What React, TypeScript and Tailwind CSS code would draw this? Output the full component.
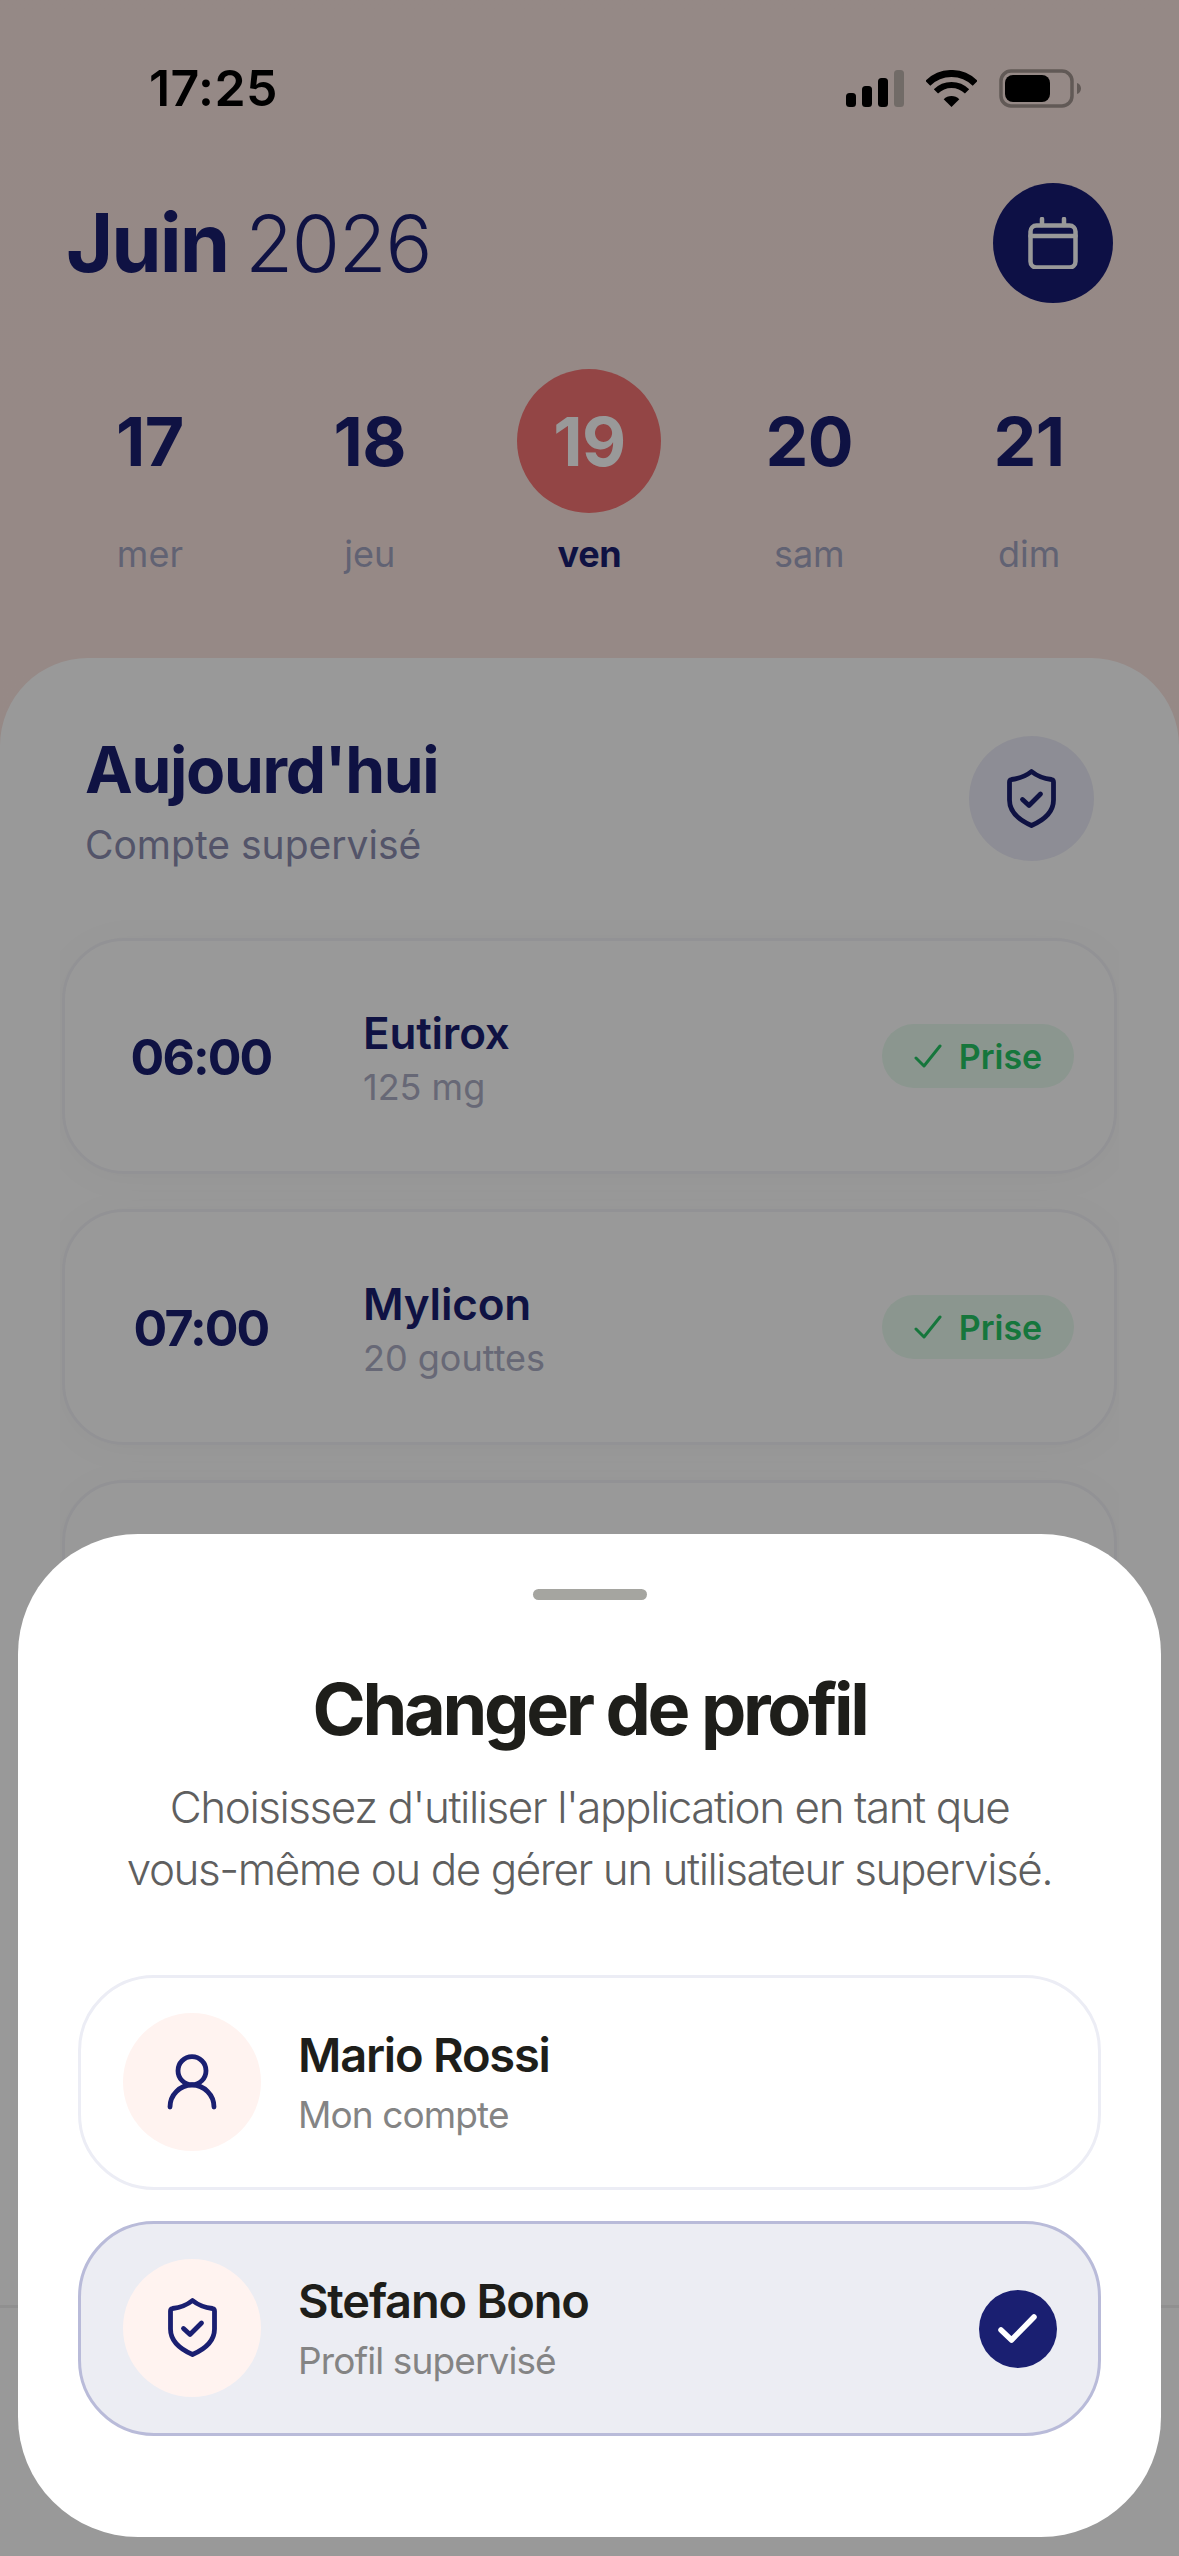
import React from "react";

const NAVY = "#1a1f71";

function Shield({ w = 49, h = 59, stroke = "#1a1f71" }: { w?: number; h?: number; stroke?: string }) {
  return (
    <svg width={w} height={h} viewBox="0 0 49 59" fill="none" stroke={stroke} strokeWidth="4.8" strokeLinecap="round" strokeLinejoin="round">
      <path d="M24.5 2.5C30 7 36 9.5 44.5 10.5Q46.5 10.8 46.5 13V31C46.5 44 36 51.5 24.5 56.5C13 51.5 2.5 44 2.5 31V13Q2.5 10.8 4.5 10.5C13 9.5 19 7 24.5 2.5Z" />
      <path d="M15.5 30.5L22 36.5L33.5 25" />
    </svg>
  );
}

function Person() {
  return (
    <svg width="50" height="56" viewBox="0 0 50 56" fill="none" stroke={NAVY} strokeWidth="4.8" strokeLinecap="round">
      <circle cx="25" cy="16.7" r="14" />
      <path d="M3 53a22 22 0 0 1 44 0" />
    </svg>
  );
}

function StatusIcons() {
  return (
    <div className="flex items-center h-[39px] mr-[98px]">
      <svg width="58" height="37" viewBox="0 0 58 37" className="mr-[22px]">
        <rect x="0" y="23" width="10" height="14" rx="3.5" fill="#000" />
        <rect x="16" y="16" width="10" height="21" rx="3.5" fill="#000" />
        <rect x="32" y="8" width="10" height="29" rx="3.5" fill="#000" />
        <rect x="48" y="0" width="10" height="37" rx="3.5" fill="#bdb2ac" />
      </svg>
      <svg width="51" height="37" viewBox="0 0 51 37" className="mr-[22px]" fill="none" stroke="#000">
        <path d="M1.8 13.3A33.5 33.5 0 0 1 49.2 13.3" strokeWidth="7" />
        <path d="M9.94 21.44A22 22 0 0 1 41.06 21.44" strokeWidth="6" />
        <path d="M25.5 37L17.7 29.2A11 11 0 0 1 33.3 29.2Z" fill="#000" stroke="none" />
      </svg>
      <svg width="82" height="39" viewBox="0 0 82 39">
        <rect x="2" y="2" width="71" height="35" rx="10" fill="none" stroke="#a2958f" strokeWidth="3.5" />
        <rect x="6" y="6" width="45" height="27" rx="8" fill="#000" />
        <path d="M78 14c2.500.5 4 3 4 5.500s-1.500 5-4 5.500z" fill="#a2958f" />
      </svg>
    </div>
  );
}

function Day({ n, d, active }: { n: string; d: string; active?: boolean }) {
  return (
    <div className="flex flex-col items-center">
      <div
        className={
          active
            ? "w-[144px] h-[144px] rounded-full bg-[#f57373] flex items-center justify-center text-[68px] font-bold text-white tracking-[-0.6px]"
            : "w-[144px] h-[144px] rounded-full flex items-center justify-center text-[68px] font-bold text-[#1a1f71] tracking-[-0.6px]"
        }
      >
        {n}
      </div>
      <div
        className={
          active
            ? "mt-[19px] h-[44px] leading-[44px] text-[36px] font-bold text-[#1a1f71] tracking-[-0.3px]"
            : "mt-[19px] h-[44px] leading-[44px] text-[36px] font-normal text-[#a2a4c0]"
        }
      >
        {d}
      </div>
    </div>
  );
}

function Med({ t, name, sub }: { t: string; name: string; sub: string }) {
  return (
    <div className="h-[236px] shrink-0 rounded-[62px] bg-white border-[3px] border-[#f4f4f8] shadow-[0_4px_40px_rgba(0,0,0,0.03)] flex items-center">
      <div className="w-[272px] pt-[2px] text-center text-[50px] font-bold text-[#1a1f71] tracking-[-1.9px]">{t}</div>
      <div className="ml-[26px] pt-[4px] flex-1 flex flex-col">
        <div className="text-[44px] leading-[52px] font-semibold text-[#1a1f71] tracking-[-0.2px]">{name}</div>
        <div className="mt-[6px] text-[36px] leading-[44px] text-[#acaec5]">{sub}</div>
      </div>
      <div className="mr-[40px] w-[192px] h-[64px] rounded-full bg-[#e8fbef] flex items-center justify-center gap-[17px]">
        <svg width="28" height="24" viewBox="0 0 28 24" fill="none" stroke="#25c565" strokeWidth="3" strokeLinecap="round" strokeLinejoin="round">
          <path d="M2 14L10 22L26 2" />
        </svg>
        <span className="text-[34px] font-semibold text-[#25c565]">Prise</span>
      </div>
    </div>
  );
}

function Row({ name, sub, active, icon }: { name: string; sub: string; active?: boolean; icon: React.ReactNode }) {
  return (
    <div
      className={
        active
          ? "h-[215px] rounded-[76px] border-[3px] border-[#b9bbd9] bg-[#ecedf3] flex items-center pl-[42px] pr-[41px]"
          : "h-[215px] rounded-[76px] border-[3px] border-[#ecedf5] bg-white flex items-center pl-[42px] pr-[41px]"
      }
    >
      <div className="w-[138px] h-[138px] mb-[2px] rounded-full bg-[#fff3f0] flex items-center justify-center">{icon}</div>
      <div className="ml-[37px] flex-1 flex flex-col">
        <div className="text-[47px] leading-[58px] -mt-[2px] font-semibold text-[#1e1e1a] tracking-[-1.2px]">{name}</div>
        <div className="mt-[8px] text-[37px] leading-[46px] text-[#848484] tracking-[-0.9px]">{sub}</div>
      </div>
      {active && (
        <div className="w-[78px] h-[78px] rounded-full bg-[#1a1f71] flex items-center justify-center">
          <svg width="40" height="32" viewBox="0 0 40 32" fill="none" stroke="#fff" strokeWidth="5.500" strokeLinecap="round" strokeLinejoin="round">
            <path d="M3 17L13.500 27L36 4" />
          </svg>
        </div>
      )}
    </div>
  );
}

export default function App() {
  return (
    <div className="relative w-[1179px] h-[2556px] overflow-hidden flex flex-col bg-gradient-to-b from-[#f9e4df] to-[#ffe8e3] font-['Inter',sans-serif]">
      <div className="pt-[63px] pl-[149px] flex items-center justify-between">
        <div className="text-[50px] leading-[51px] font-semibold text-black tracking-[0.4px]">17:25</div>
        <StatusIcons />
      </div>

      <div className="mt-[69px] px-[66px] flex items-center justify-between h-[120px]">
        <div className="text-[78px] leading-[90px] text-[#1a1f71]">
          <span className="font-bold text-[81px] tracking-[-2px]">Juin</span>
          <span className="ml-[17px] font-light tracking-[-1.2px]">2026</span>
        </div>
        <div className="w-[120px] h-[120px] rounded-full bg-[#171c73] flex items-center justify-center">
          <svg width="50" height="52" viewBox="0 0 50 52" fill="none" stroke="#fff" strokeWidth="4.500" strokeLinecap="round" strokeLinejoin="round">
            <rect x="2.500" y="8.500" width="45" height="42" rx="6" />
            <path d="M2.500 19H47.500M14 2V8M36 2V8" />
          </svg>
        </div>
      </div>

      <div className="mt-[66px] px-[40px] grid grid-cols-5">
        <Day n="17" d="mer" />
        <Day n="18" d="jeu" />
        <Day n="19" d="ven" active />
        <Day n="20" d="sam" />
        <Day n="21" d="dim" />
      </div>

      <div className="mt-[82px] flex-1 min-h-0 rounded-t-[88px] bg-white flex flex-col">
        <div className="pt-[74px] pl-[85px] pr-[85px] flex justify-between items-start">
          <div>
            <div className="text-[64px] leading-[76px] font-bold text-[#1a1f71] tracking-[-1.3px]">Aujourd'hui</div>
            <div className="mt-[14px] text-[39px] leading-[46px] text-[#8a8cb0]">Compte supervisé</div>
          </div>
          <div className="mt-[4px] w-[125px] h-[125px] rounded-full bg-[#ececf8] flex items-center justify-center">
            <Shield />
          </div>
        </div>
        <div className="mt-[52px] mx-[60px] pt-[18px] px-[2px] flex-1 min-h-0 overflow-hidden flex flex-col gap-[35px]">
          <Med t="06:00" name="Eutirox" sub="125 mg" />
          <Med t="07:00" name="Mylicon" sub="20 gouttes" />
          <Med t="08:00" name="Eutirox" sub="125 mg" />
        </div>
        <div className="h-[251px] shrink-0 border-t-[3px] border-[#f0f0f0]" />
      </div>

      <div className="absolute inset-0 bg-black/40 flex flex-col justify-end px-[18px] pb-[19px]">
        <div className="h-[1003px] rounded-[120px] bg-white flex flex-col items-stretch">
          <div className="mt-[55px] self-center w-[114px] h-[11px] rounded-full bg-[#a5a5a0]" />
          <div className="mt-[65px] text-center text-[72px] leading-[88px] font-bold text-[#1e1e1a] tracking-[-3.3px]">Changer de profil</div>
          <div className="mt-[23px] text-center text-[44px] leading-[62px] font-light text-[#5f5f5f] tracking-[-1.45px]">
            Choisissez d'utiliser l'application en tant que
            <br />
            vous-même ou de gérer un utilisateur supervisé.
          </div>
          <div className="mt-[75px] mx-[60px] flex flex-col gap-[31px]">
            <Row name="Mario Rossi" sub="Mon compte" icon={<Person />} />
            <Row name="Stefano Bono" sub="Profil supervisé" active icon={<Shield />} />
          </div>
        </div>
      </div>
    </div>
  );
}
